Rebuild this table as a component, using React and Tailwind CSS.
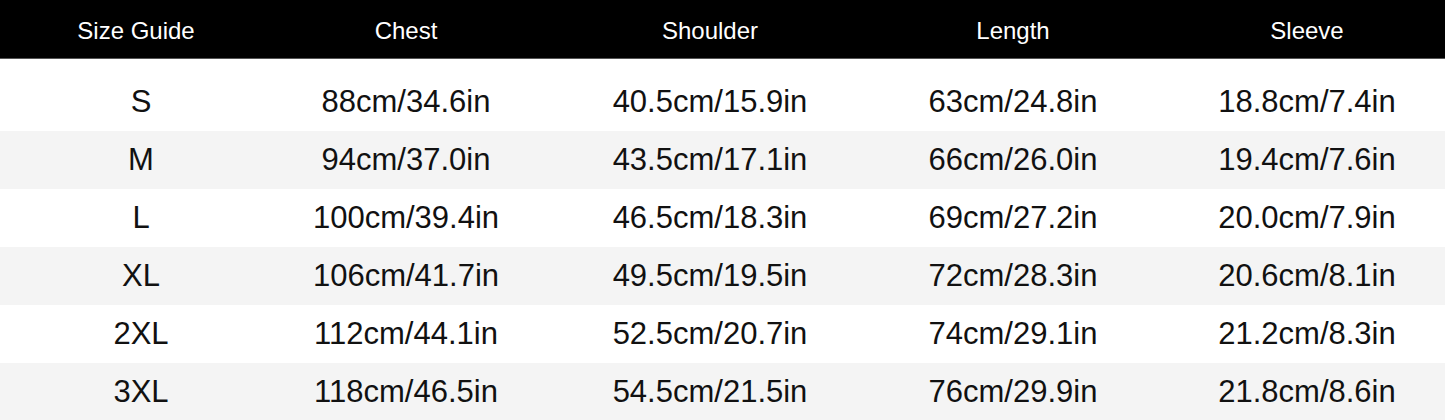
import React from 'react';

const rows = [
    ['S', '88cm/34.6in', '40.5cm/15.9in', '63cm/24.8in', '18.8cm/7.4in'],
    ['M', '94cm/37.0in', '43.5cm/17.1in', '66cm/26.0in', '19.4cm/7.6in'],
    ['L', '100cm/39.4in', '46.5cm/18.3in', '69cm/27.2in', '20.0cm/7.9in'],
    ['XL', '106cm/41.7in', '49.5cm/19.5in', '72cm/28.3in', '20.6cm/8.1in'],
    ['2XL', '112cm/44.1in', '52.5cm/20.7in', '74cm/29.1in', '21.2cm/8.3in'],
    ['3XL', '118cm/46.5in', '54.5cm/21.5in', '76cm/29.9in', '21.8cm/8.6in'],
];

const headers = ['Size Guide', 'Chest', 'Shoulder', 'Length', 'Sleeve'];

// column tracks tuned so centres sit at ~138 / 406 / 710 / 1013 / 1307
const grid = 'grid grid-cols-[276px_260px_348px_258px_303px] items-center';

const App = () => {
    return (
        <div className="w-[1445px] h-[420px] overflow-hidden bg-white" style={{ fontFamily: '"Liberation Sans", Arial, sans-serif' }}>
            <div className={`${grid} h-[59px] pt-[3px] bg-black text-white text-[24px] border-b border-[#555]`}>
                {headers.map((h, i) => (
                    <div key={i} className={`text-center ${i === 0 ? 'pr-[4px]' : ''} ${i === 4 ? 'pl-[27px]' : ''}`}>{h}</div>
                ))}
            </div>
            <div className="h-[14px]" />
            {rows.map((row, r) => (
                <div
                    key={r}
                    className={`${grid} h-[58px] pt-[1px] text-[31px] text-[#111] ${r % 2 === 1 ? 'bg-[#f4f4f4]' : 'bg-white'}`}
                >
                    {row.map((cell, i) => (
                        <div key={i} className={`text-center ${i === 0 ? 'pl-[6px]' : ''} ${i === 4 ? 'pl-[27px]' : ''}`}>{cell}</div>
                    ))}
                </div>
            ))}
        </div>
    );
};

export default App;
